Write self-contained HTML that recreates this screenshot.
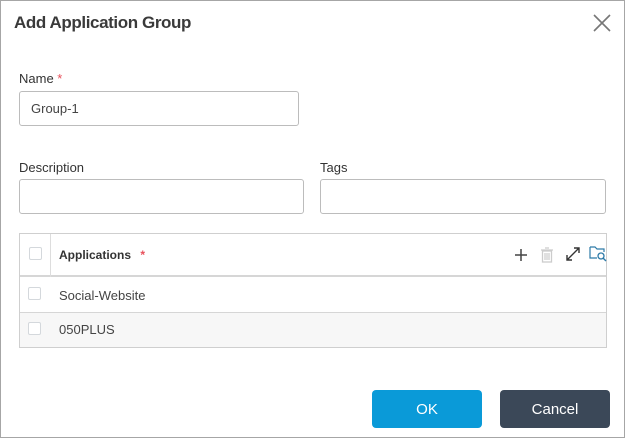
<!DOCTYPE html>
<html><head><style>
*{box-sizing:border-box;margin:0;padding:0}
body{width:626px;height:439px;background:#fff;font-family:"Liberation Sans",sans-serif;position:relative;overflow:hidden;color:#333}
.frame{position:absolute;left:0;top:0;width:625px;height:438px;border:1px solid #a6a6a6}
.abs{position:absolute}
.inp{position:absolute;border:1px solid #bcbcbc;border-radius:3px;background:#fff}
.lbl{position:absolute;font-size:13px;color:#333}
.cb{position:absolute;width:13px;height:13px;border:1px solid #d4d8dc;border-radius:2px;background:#fff}
</style></head><body>
<div class="frame"></div>
<div class="abs" style="left:14px;top:13px;font-size:17px;color:#3a3a3a;letter-spacing:-0.4px;font-weight:bold;-webkit-text-stroke:0">Add Application Group</div>
<svg class="abs" style="left:593px;top:14px" width="18" height="18"><path d="M1 1L17 17M17 1L1 17" stroke="#777" stroke-width="1.6"/></svg>
<div class="lbl" style="left:19px;top:71px">Name <span style="color:#e8505b">*</span></div>
<div class="inp" style="left:19px;top:91px;width:280px;height:35px"><span style="position:absolute;left:11px;top:9px;font-size:13px;color:#444">Group-1</span></div>
<div class="lbl" style="left:19px;top:160px">Description</div>
<div class="inp" style="left:19px;top:179px;width:285px;height:35px"></div>
<div class="lbl" style="left:320px;top:160px">Tags</div>
<div class="inp" style="left:320px;top:179px;width:286px;height:35px"></div>
<div class="abs" style="left:19px;top:233px;width:588px;height:115px;border:1px solid #cfcfcf">
 <div class="abs" style="left:0;top:0;width:586px;height:43px;border-bottom:2px solid #d6d6d6"></div>
 <div class="abs" style="left:30px;top:0;width:1px;height:43px;background:#ddd"></div>
 <div class="cb" style="left:9px;top:13px"></div>
 <div class="abs" style="left:39px;top:14px;font-size:12px;font-weight:bold;color:#333">Applications <span style="color:#e8505b;margin-left:6px">*</span></div>
 <svg class="abs" style="left:494px;top:14px" width="14" height="14"><path d="M7 1V13M1 7H13" stroke="#444" stroke-width="1.5"/></svg>
 <svg class="abs" style="left:520px;top:13px" width="14" height="16"><rect x="2.5" y="4" width="9" height="11" fill="none" stroke="#ccc" stroke-width="1.3"/><path d="M1 3H13M5 1H9M5 6V13M7 6V13M9 6V13" stroke="#ccc" stroke-width="1.2"/></svg>
 <svg class="abs" style="left:545px;top:12px" width="16" height="16"><path d="M2 14L14 2M9 2H14V7M2 9V14H7" stroke="#333" stroke-width="1.4" fill="none"/></svg>
 <svg class="abs" style="left:569px;top:10px" width="18" height="18"><path d="M1 3H6L8 5H15V8M1 3V14H8" stroke="#2d7aa8" stroke-width="1.2" fill="none"/><circle cx="12" cy="12" r="3" fill="none" stroke="#2d7aa8" stroke-width="1.3"/><path d="M14 14L17 17" stroke="#2d7aa8" stroke-width="1.4"/></svg>
 <div class="abs" style="left:0;top:44px;width:586px;height:35px;border-bottom:1px solid #d6d6d6"></div>
 <div class="cb" style="left:8px;top:53px"></div>
 <div class="abs" style="left:39px;top:54px;font-size:13px;color:#444">Social-Website</div>
 <div class="abs" style="left:0;top:79px;width:586px;height:34px;background:#f7f7f7"></div>
 <div class="cb" style="left:8px;top:88px"></div>
 <div class="abs" style="left:39px;top:88px;font-size:13px;color:#444">050PLUS</div>
</div>
<div class="abs" style="left:372px;top:390px;width:110px;height:38px;background:#0a9ad8;border-radius:4px;color:#fff;font-size:15px;text-align:center;line-height:40px">OK</div>
<div class="abs" style="left:500px;top:390px;width:110px;height:38px;background:#3b4858;border-radius:4px;color:#fff;font-size:15px;text-align:center;line-height:40px">Cancel</div>
</body></html>
